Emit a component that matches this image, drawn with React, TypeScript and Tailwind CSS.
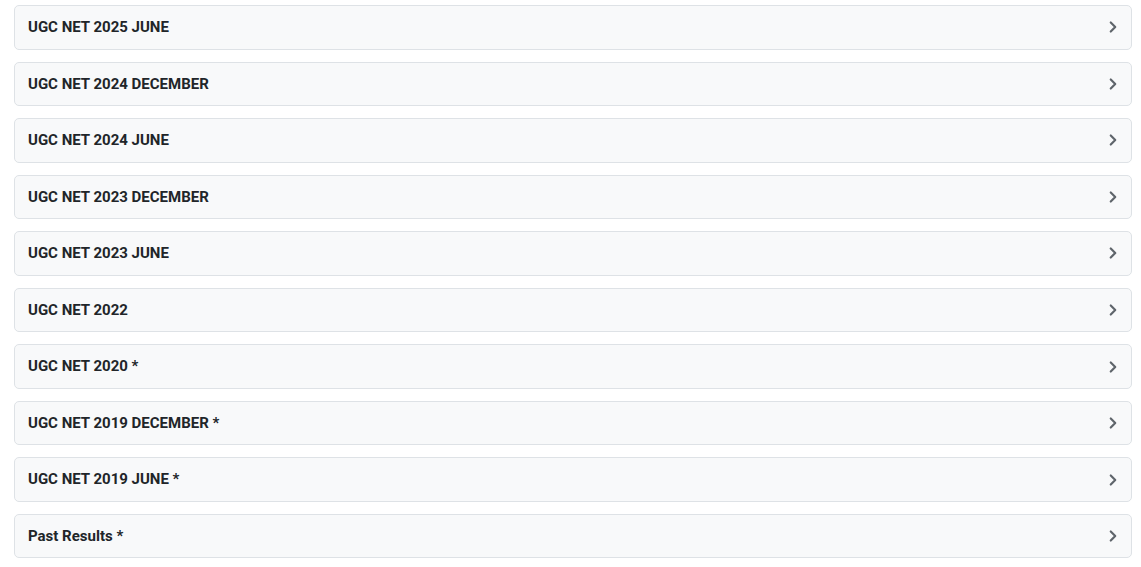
import { ChevronRight } from 'lucide-react';

const items = [
  'UGC NET 2025 JUNE',
  'UGC NET 2024 DECEMBER',
  'UGC NET 2024 JUNE',
  'UGC NET 2023 DECEMBER',
  'UGC NET 2023 JUNE',
  'UGC NET 2022',
  'UGC NET 2020 *',
  'UGC NET 2019 DECEMBER *',
  'UGC NET 2019 JUNE *',
  'Past Results *',
];

const App = () => {
  return (
    <div className="bg-white min-h-screen pt-[5px] pl-[14px] pr-[9px] font-['Roboto',sans-serif]">
      <div className="flex flex-col gap-[12px]">
        {items.map((label) => (
          <button
            key={label}
            type="button"
            className="h-[44.56px] w-full flex items-center justify-between pl-[13px] pr-[9px] bg-[#f8f9fa] border border-[#dee2e6] rounded-[5px] text-left"
          >
            <span className="text-[15px] font-bold text-[#212529]">{label}</span>
            <ChevronRight size={18} strokeWidth={2.9} className="text-[#5f656b]" />
          </button>
        ))}
      </div>
    </div>
  );
};

export default App;
